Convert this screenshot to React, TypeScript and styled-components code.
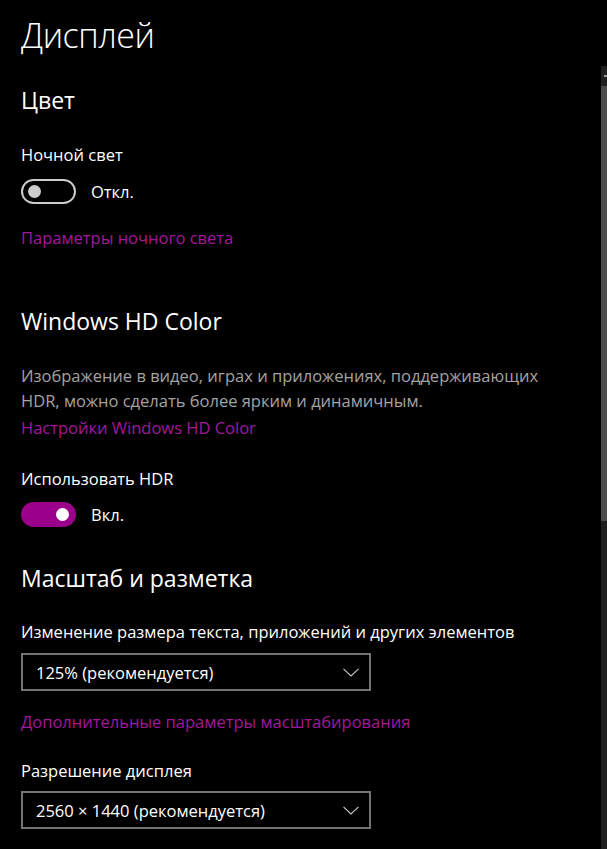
import React from "react";
import styled, { createGlobalStyle } from "styled-components";

const GlobalStyle = createGlobalStyle`
  html, body {
    margin: 0;
    padding: 0;
    background: #000;
  }
  body {
    font-family: "Open Sans", "Noto Sans", "Liberation Sans", sans-serif;
    color: #fff;
    overflow: hidden;
  }
`;

const Window = styled.div`
  display: flex;
  min-height: 100vh;
  background: #000;
`;

const Content = styled.div`
  flex: 1;
  padding-left: 21px;
  display: flex;
  flex-direction: column;
  align-items: flex-start;
`;

const PageTitle = styled.h1`
  margin: 15px 0 0;
  font-size: 34px;
  line-height: 40px;
  font-weight: 300;
  letter-spacing: -0.5px;
`;

const SectionTitle = styled.h2<{ $gap: number }>`
  margin: ${(p) => p.$gap}px 0 0;
  font-size: 23px;
  line-height: 30px;
  font-weight: 400;
`;

const Label = styled.div<{ $gap: number }>`
  margin-top: ${(p) => p.$gap}px;
  font-size: 16.5px;
  line-height: 20px;
`;

const Description = styled.p<{ $gap: number }>`
  margin: ${(p) => p.$gap}px 0 0;
  font-size: 16.5px;
  line-height: 25px;
  color: #a3a3a3;
  max-width: 560px;
`;

const Link = styled.a<{ $gap: number }>`
  display: block;
  margin-top: ${(p) => p.$gap}px;
  font-size: 16.5px;
  line-height: 20px;
  color: #a3179d;
  text-decoration: none;
`;

const ToggleRow = styled.div<{ $gap: number }>`
  display: flex;
  align-items: center;
  gap: 15px;
  margin-top: ${(p) => p.$gap}px;
  font-size: 16.5px;
`;

const Track = styled.div<{ $on: boolean }>`
  box-sizing: border-box;
  width: 55px;
  height: 25px;
  border-radius: 13px;
  display: flex;
  align-items: center;
  padding: 0 5px;
  justify-content: ${(p) => (p.$on ? "flex-end" : "flex-start")};
  background: ${(p) => (p.$on ? "#9a0089" : "transparent")};
  border: 2px solid ${(p) => (p.$on ? "#9a0089" : "#cccccc")};
`;

const Knob = styled.div<{ $on: boolean }>`
  width: 13px;
  height: 13px;
  border-radius: 50%;
  background: ${(p) => (p.$on ? "#ffffff" : "#cccccc")};
`;

const Select = styled.div<{ $gap: number }>`
  box-sizing: border-box;
  margin-top: ${(p) => p.$gap}px;
  width: 350px;
  height: 38px;
  border: 2px solid #737373;
  display: flex;
  align-items: center;
  justify-content: space-between;
  padding: 0 10px 0 13px;
  font-size: 16.5px;
`;

const ScrollRail = styled.div`
  width: 6px;
  margin-top: 66px;
  background: #1f1f1f;
  display: flex;
  flex-direction: column;
`;

const ScrollArrow = styled.div`
  height: 20px;
  display: flex;
  align-items: center;
  justify-content: flex-end;
  &::after {
    content: "";
    width: 3px;
    height: 2px;
    background: #9a9a9a;
  }
`;

const ScrollThumb = styled.div`
  height: 435px;
  background: #4d4d4d;
`;

const Toggle = ({ on, gap }: { on: boolean; gap: number }) => (
  <ToggleRow $gap={gap}>
    <Track $on={on}>
      <Knob $on={on} />
    </Track>
    <span>{on ? "Вкл." : "Откл."}</span>
  </ToggleRow>
);

const Chevron = () => (
  <svg width="16" height="9" viewBox="0 0 16 9" fill="none">
    <path d="M0.5 0.8 L8 8 L15.5 0.8" stroke="#c8c8c8" strokeWidth="1.1" />
  </svg>
);

const Dropdown = ({ value, gap }: { value: string; gap: number }) => (
  <Select $gap={gap}>
    <span>{value}</span>
    <Chevron />
  </Select>
);

export default function App() {
  return (
    <Window>
      <GlobalStyle />
      <Content>
        <PageTitle>Дисплей</PageTitle>

        <SectionTitle $gap={30}>Цвет</SectionTitle>
        <Label $gap={30}>Ночной свет</Label>
        <Toggle on={false} gap={14} />
        <Link $gap={24}>Параметры ночного света</Link>

        <SectionTitle $gap={58}>Windows HD Color</SectionTitle>
        <Description $gap={27}>
          Изображение в видео, играх и приложениях, поддерживающих
          <br />
          HDR, можно сделать более ярким и динамичным.
        </Description>
        <Link $gap={5}>Настройки Windows HD Color</Link>
        <Label $gap={31}>Использовать HDR</Label>
        <Toggle on gap={13} />

        <SectionTitle $gap={36}>Масштаб и разметка</SectionTitle>
        <Label $gap={29}>Изменение размера текста, приложений и других элементов</Label>
        <Dropdown value="125% (рекомендуется)" gap={11} />
        <Link $gap={21}>Дополнительные параметры масштабирования</Link>
        <Label $gap={29}>Разрешение дисплея</Label>
        <Dropdown value="2560 × 1440 (рекомендуется)" gap={10} />
      </Content>
      <ScrollRail>
        <ScrollArrow />
        <ScrollThumb />
      </ScrollRail>
    </Window>
  );
}
